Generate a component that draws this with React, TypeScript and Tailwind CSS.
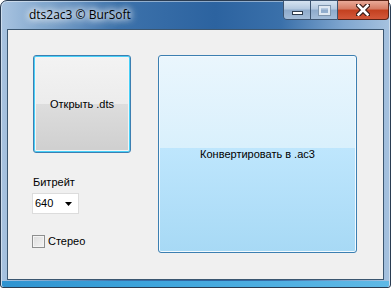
export default function App() {
  return (
    <div className="w-[391px] h-[288px] overflow-hidden bg-white">
      <div className="relative flex flex-col w-[391px] h-[288px] rounded-t-[7px] rounded-b-[3px] border border-[#2a3c52] bg-[linear-gradient(90deg,#a8c3e0_0%,#7fa5cc_12%,#3d72ab_30%,#2c63a0_55%,#3a70aa_72%,#7fa6cf_88%,#a6c2df_100%)] shadow-[inset_0_0_0_1px_rgba(255,255,255,0.45)]">
        {/* Title bar */}
        <div className="h-[28px] flex items-center pl-[28px]">
          <span className="font-['Open_Sans','Noto_Sans',sans-serif] text-[12px] text-black [text-shadow:0_0_6px_#fff,0_0_8px_#fff,0_0_10px_#fff]">
            dts2ac3 © BurSoft
          </span>
        </div>

        {/* Caption buttons */}
        <div className="absolute top-[-1px] right-[1px] flex h-[20px]">
          <div className="flex rounded-bl-[4px] border border-[#3d5470] overflow-hidden">
            <div className="w-[27px] flex items-center justify-center bg-[linear-gradient(180deg,#d6e3f1_0%,#b3c8df_45%,#8eaacb_50%,#a3bcd8_100%)] border-r border-[#3d5470]">
              <div className="w-[11px] h-[4px] bg-white border border-[#2d3b4d] mt-[5px]" />
            </div>
            <div className="w-[26px] flex items-center justify-center bg-[linear-gradient(180deg,#d6e3f1_0%,#b3c8df_45%,#8eaacb_50%,#a3bcd8_100%)]">
              <div className="w-[11px] h-[9px] border-[2px] border-[#dfe8f2] outline outline-1 outline-[#7f95ad]" />
            </div>
          </div>
          <div className="w-[51px] flex items-center justify-center rounded-br-[4px] border border-l-0 border-[#5a2418] bg-[linear-gradient(180deg,#e9aa98_0%,#d57a62_45%,#c3401f_50%,#d3583a_100%)]">
            <svg width="14" height="12" viewBox="0 0 14 12">
              <path d="M2 1 L12 11 M12 1 L2 11" stroke="#3b1c16" strokeWidth="5" strokeLinecap="square" />
              <path d="M2.5 1.5 L11.5 10.5 M11.5 1.5 L2.5 10.5" stroke="#fff" strokeWidth="2.6" strokeLinecap="square" />
            </svg>
          </div>
        </div>

        {/* Client area */}
        <div className="mx-[6px] mb-[7px] flex-1 border border-[#3b5670] bg-[#f0f0f0] font-['Liberation_Sans',Arial,sans-serif] text-[11px] text-black">
          <div className="flex gap-[27px] pl-[25px] pt-[25px]">
            <div className="flex flex-col w-[98px]">
              <button className="relative w-[98px] h-[98px] rounded-[3px] border border-[#3c7fb1] shadow-[inset_0_0_0_1px_#48d0f8,inset_0_0_0_2px_#f4f4f4] bg-[linear-gradient(180deg,#f3f3f3_0%,#ececec_50%,#dddddd_50%,#cfcfcf_100%)] flex items-center justify-center">
                Открыть .dts
              </button>
              <div className="mt-[23px] leading-[13px]">Битрейт</div>
              <div className="mt-[4px] -ml-[1px] w-[47px] h-[21px] bg-white border border-[#dcdcdc] flex items-center justify-between pl-[2px] pr-[6px]">
                <span>640</span>
                <svg width="7" height="4" viewBox="0 0 7 4">
                  <path d="M0 0 H7 L3.5 4 Z" fill="#000" />
                </svg>
              </div>
              <label className="mt-[19px] -ml-[1px] flex items-center gap-[3px]">
                <span className="w-[13px] h-[13px] border border-[#8e8f8f] bg-[linear-gradient(135deg,#dcdcdc_0%,#f4f4f4_100%)] shadow-[inset_0_0_0_1px_#f4f4f4]" />
                <span>Стерео</span>
              </label>
            </div>
            <button className="w-[199px] h-[198px] rounded-[3px] border border-[#3c7fb1] shadow-[inset_0_0_0_1px_#f2faff] bg-[linear-gradient(180deg,#eaf6fd_0%,#d9f0fc_47%,#bee6fd_47%,#a7d9f5_100%)] flex items-center justify-center">
              Конвертировать в .ac3
            </button>
          </div>
        </div>

        {/* bottom bright frame */}
        <div className="absolute left-[1px] right-[1px] bottom-0 h-[6px] bg-[linear-gradient(90deg,#2f93d0_0%,#3ea5dc_40%,#5fb9e6_100%)] rounded-b-[2px]" />
      </div>
    </div>
  )
}
